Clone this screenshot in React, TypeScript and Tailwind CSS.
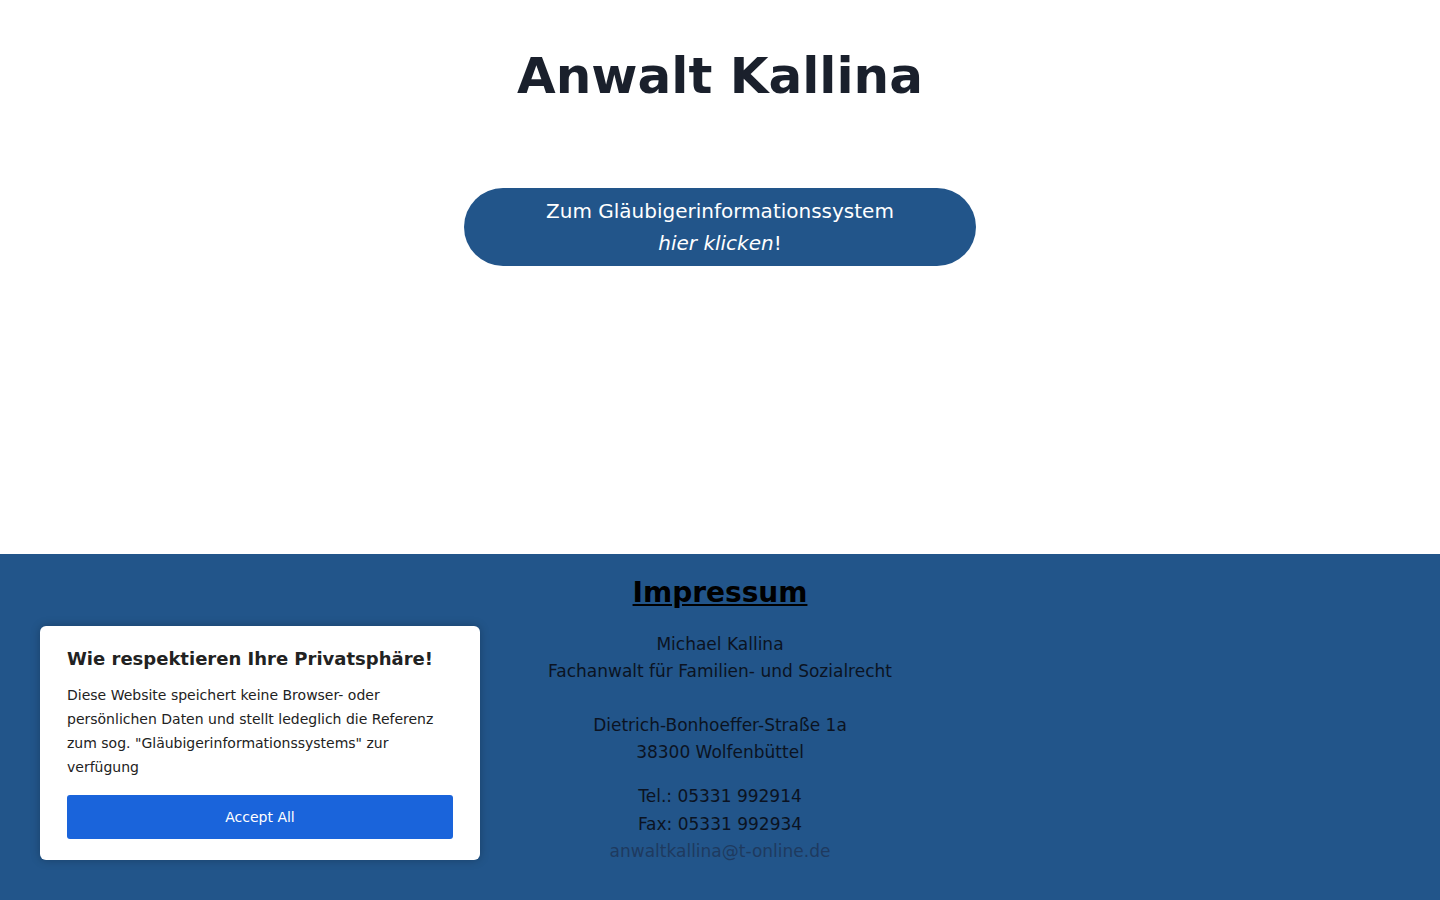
import React from "react";

export default function App() {
  const font = { fontFamily: '"DejaVu Sans", Verdana, sans-serif' };
  return (
    <div style={font} className="min-h-[900px] flex flex-col bg-white">
      <main className="h-[554px] flex flex-col items-center">
        <h1 className="mt-[46px] text-[50px] leading-[60px] font-bold text-[#1a202c]">
          Anwalt Kallina
        </h1>
        <a
          href="#"
          className="mt-[82px] w-[512px] h-[78px] rounded-full bg-[#22558a] text-white text-[20px] leading-[32px] flex flex-col items-center justify-center"
        >
          <span>Zum Gläubigerinformationssystem</span>
          <span>
            <em>hier klicken</em>!
          </span>
        </a>
      </main>
      <footer className="relative flex-1 bg-[#22558a] flex flex-col items-center pt-[22px] pb-[36px] text-[17px] leading-[27px] text-[#0b1322] text-center">
        <h2 className="text-[28px] leading-[34px] font-bold underline text-black">Impressum</h2>
        <p className="mt-[21px]">
          Michael Kallina
          <br />
          Fachanwalt für Familien- und Sozialrecht
          <br />
          <br />
          Dietrich-Bonhoeffer-Straße 1a
          <br />
          38300 Wolfenbüttel
        </p>
        <p className="mt-[16px] leading-[28px]">
          Tel.: 05331 992914
          <br />
          Fax: 05331 992934
        </p>
        <a href="#" className="text-[#1e3a5f] leading-[27px]">
          anwaltkallina@t-online.de
        </a>
        <div className="absolute left-[40px] top-[72px] w-[440px] bg-white rounded-md shadow-[0_0_10px_rgba(0,0,0,0.25)] px-[27px] pt-[19px] pb-[21px] text-left">
          <h3 className="text-[18px] leading-[27px] font-bold text-[#222222]">
            Wie respektieren Ihre Privatsphäre!
          </h3>
          <p className="mt-[11px] text-[14px] leading-[24px] text-[#222222]">
            Diese Website speichert keine Browser- oder persönlichen Daten und stellt ledeglich die Referenz zum sog.
            "Gläubigerinformationssystems" zur verfügung
          </p>
          <button className="mt-[16px] w-full h-[44px] rounded-[3px] bg-[#1a64db] text-white text-[14px] leading-[20px]">
            Accept All
          </button>
        </div>
      </footer>
    </div>
  );
}
